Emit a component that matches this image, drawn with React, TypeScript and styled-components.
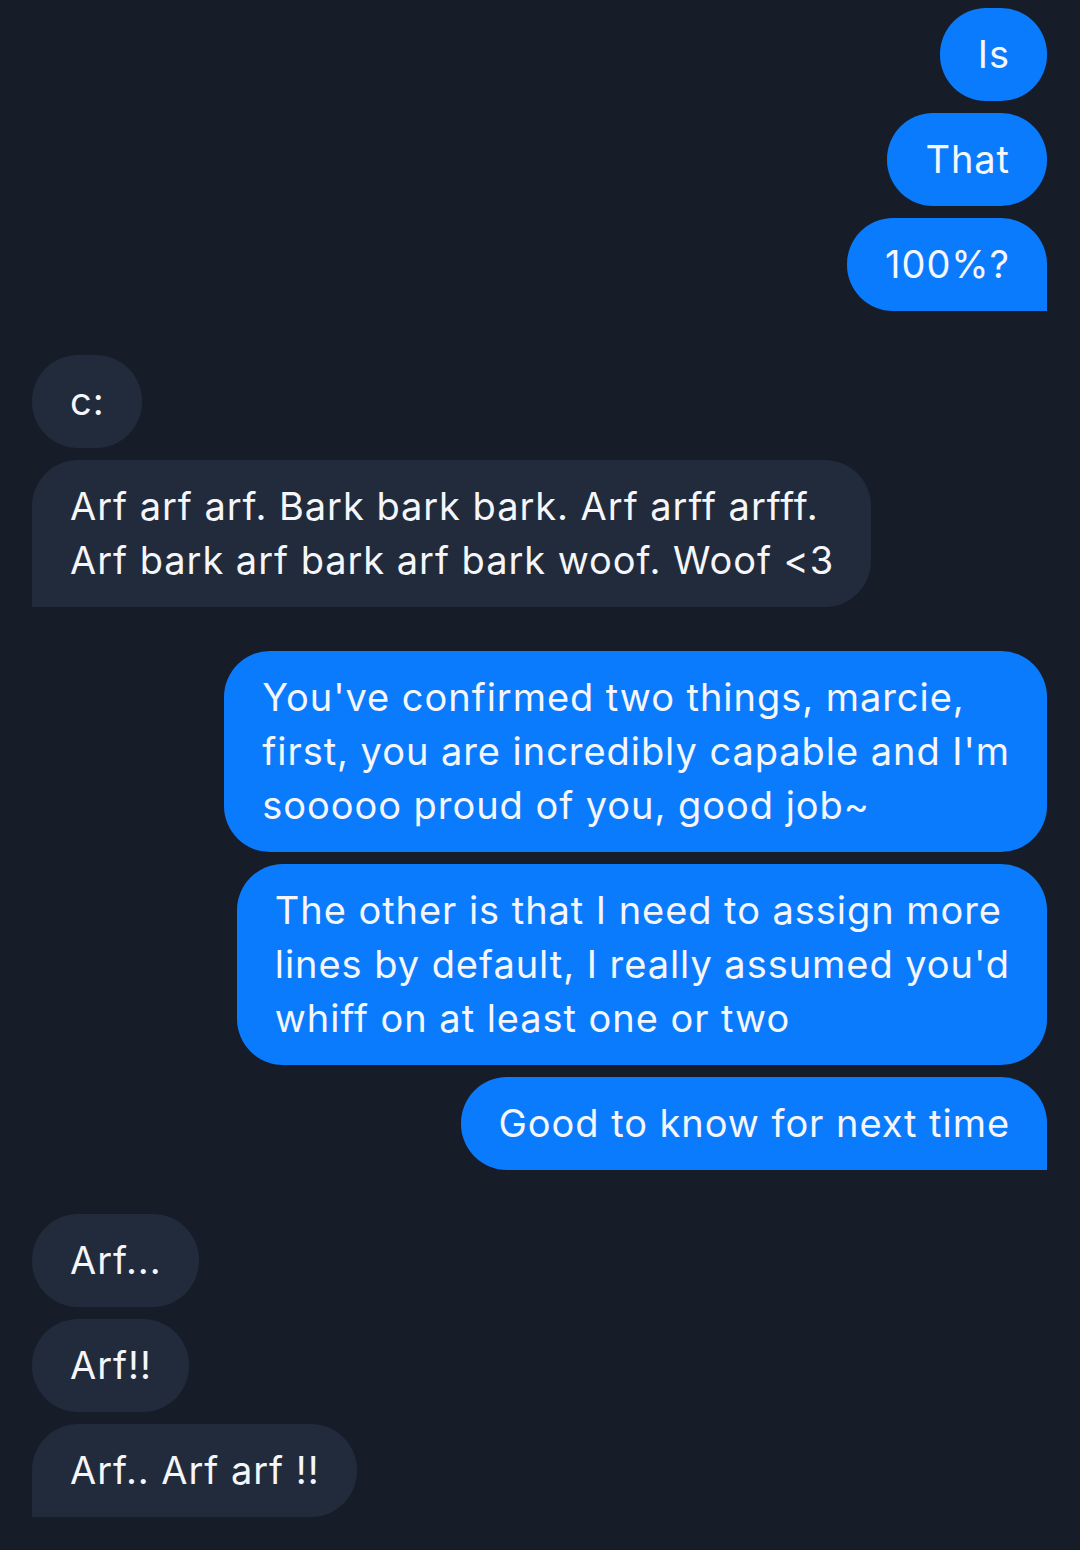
import { createGlobalStyle, styled } from "styled-components";

const GlobalStyle = createGlobalStyle`
  html, body {
    margin: 0;
    padding: 0;
    background: #161d29;
  }
  body {
    font-family: Inter, "Noto Sans", sans-serif;
  }
`;

type Side = "me" | "them";

type Group = {
  from: Side;
  messages: string[];
};

const groups: Group[] = [
  { from: "me", messages: ["Is", "That", "100%?"] },
  {
    from: "them",
    messages: [
      "c:",
      "Arf arf arf. Bark bark bark. Arf arff arfff.\nArf bark arf bark arf bark woof. Woof <3",
    ],
  },
  {
    from: "me",
    messages: [
      "You've confirmed two things, marcie,\nfirst, you are incredibly capable and I'm\nsooooo proud of you, good job~",
      "The other is that I need to assign more\nlines by default, I really assumed you'd\nwhiff on at least one or two",
      "Good to know for next time",
    ],
  },
  { from: "them", messages: ["Arf...", "Arf!!", "Arf.. Arf arf !!"] },
];

const Page = styled.div`
  min-height: 1550px;
  box-sizing: border-box;
  padding: 8px 33px 0 32px;
  display: flex;
  flex-direction: column;
  gap: 44px;
  background: #161d29;
`;

const Thread = styled.div<{ $from: Side }>`
  display: flex;
  flex-direction: column;
  align-items: ${(p) => (p.$from === "me" ? "flex-end" : "flex-start")};
  gap: 12px;
`;

const Bubble = styled.div<{ $from: Side; $tail: boolean }>`
  box-sizing: border-box;
  padding: 19px 37px 20px 38px;
  font-size: 38px;
  letter-spacing: 0.95px;
  line-height: 54px;
  color: #f4f6fa;
  white-space: pre-line;
  border-radius: 46px;
  background: ${(p) => (p.$from === "me" ? "#0b7bfd" : "#212b3b")};
  ${(p) =>
    p.$tail &&
    (p.$from === "me"
      ? "border-bottom-right-radius: 0;"
      : "border-bottom-left-radius: 0;")}
`;

export default function App() {
  return (
    <>
      <GlobalStyle />
      <Page>
        {groups.map((group, gi) => (
          <Thread key={gi} $from={group.from}>
            {group.messages.map((text, mi) => (
              <Bubble
                key={mi}
                $from={group.from}
                $tail={mi === group.messages.length - 1 && !(gi === 1 && mi === 0)}
              >
                {text}
              </Bubble>
            ))}
          </Thread>
        ))}
      </Page>
    </>
  );
}
